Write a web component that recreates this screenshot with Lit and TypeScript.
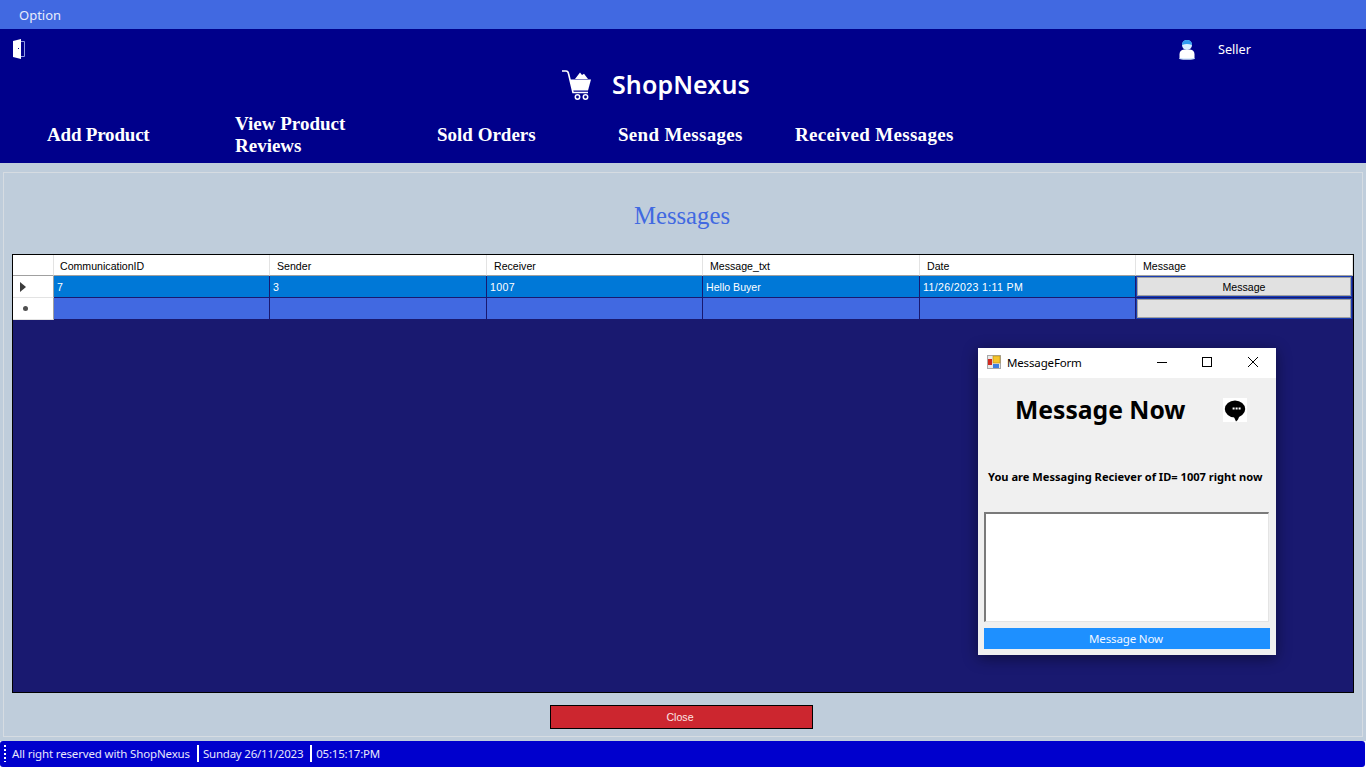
import { LitElement, html, css, svg } from 'lit';
import { customElement } from 'lit/decorators.js';

const SEGOE = css`"Noto Sans", "Open Sans", sans-serif`;

const doorIcon = svg`
  <svg width="14" height="22" viewBox="0 0 14 22" aria-hidden="true">
    <path d="M9 3.5 H12.5 V18.5 H9" fill="none" stroke="#8f9be0" stroke-width="1"/>
    <path d="M1 3 L9 1 V21 L1 19 Z" fill="#fff"/>
    <rect x="6" y="10" width="1" height="1" fill="#00008b"/>
  </svg>`;

const cartIcon = svg`
  <svg width="32" height="32" viewBox="0 0 32 32" aria-hidden="true">
    <path d="M1 2 H5 Q7 2 7.5 4.5 L12 23.5 H27" fill="none" stroke="#fff" stroke-width="1.6"/>
    <path d="M9 10.5 H30 L27 21.5 H11.5 Z" fill="#fff"/>
    <path d="M14 10 L19 3.5 L21 6 L23 4.8 L27 10 Z" fill="#fff"/>
    <circle cx="16.5" cy="28" r="2.2" fill="none" stroke="#fff" stroke-width="1.5"/>
    <circle cx="24.5" cy="28" r="2.2" fill="none" stroke="#fff" stroke-width="1.5"/>
  </svg>`;

const userIcon = svg`
  <svg width="18" height="21" viewBox="0 0 18 21" aria-hidden="true">
    <path d="M1.5 20 V15.5 Q1.5 11 6 10.5 H12 Q16.5 11 16.5 15.5 V20 Q9 21 1.5 20 Z" fill="#fff"/>
    <path d="M1.5 19 Q9 20 16.5 19 V20 Q9 21 1.5 20 Z" fill="#bcd8f8"/>
    <circle cx="9" cy="6" r="5" fill="#d8eeff"/>
    <path d="M4 6 Q4 1 9 1 Q14 1 14 6 Q9 4 4 6 Z" fill="#2f9bf0"/>
  </svg>`;

const formIcon = svg`
  <svg width="14" height="14" viewBox="0 0 14 14" aria-hidden="true">
    <rect x="0.5" y="0.5" width="13" height="13" fill="#e8e8e8" stroke="#a8a8a8"/>
    <rect x="6" y="1" width="7" height="7" fill="#f5c52c" stroke="#b98a10" stroke-width="0.6"/>
    <rect x="1" y="4" width="4" height="6" fill="#d02a20"/>
    <rect x="6" y="9" width="6" height="4" fill="#3d7fe0"/>
  </svg>`;

const chatIcon = svg`
  <svg width="24" height="24" viewBox="0 0 24 24" aria-hidden="true">
    <rect width="24" height="24" fill="#fff"/>
    <ellipse cx="12" cy="11" rx="10.2" ry="8.6" fill="#000"/>
    <path d="M10.5 18 L13 23.5 Q15.5 22 16.5 17 Z" fill="#000"/>
    <rect x="9.6" y="9.5" width="2" height="2" fill="#fff"/>
    <rect x="12.6" y="9.5" width="2" height="2" fill="#fff"/>
    <rect x="15.6" y="9.5" width="2" height="2" fill="#fff"/>
  </svg>`;

@customElement('app-root')
export class AppRoot extends LitElement {
  static styles = css`
    :host {
      display: block;
      width: 1366px;
      height: 768px;
      overflow: hidden;
      background: #fff;
      font-family: "Liberation Sans", Arial, sans-serif;
    }

    .page {
      position: relative;
      display: flex;
      flex-direction: column;
      height: 768px;
    }

    .menu {
      height: 29px;
      flex: none;
      display: flex;
      align-items: center;
      padding-left: 19px;
      box-sizing: border-box;
      background: #4169e1;
      color: #e8ecfb;
      font: 13px ${SEGOE};
    }

    .header {
      height: 134px;
      flex: none;
      background: #00008b;
      color: #fff;
    }

    .top {
      height: 40px;
      display: flex;
      align-items: center;
      padding-left: 12px;
    }

    .user {
      margin-left: auto;
      margin-right: 115px;
      display: flex;
      align-items: center;
      gap: 22px;
      font: 12.7px ${SEGOE};
    }

    .brand {
      height: 32px;
      display: flex;
      align-items: center;
      padding-left: 561px;
      gap: 19px;
      font: 600 25px ${SEGOE};
      letter-spacing: 0.1px;
    }

    .brand span {
      margin-bottom: 2px;
    }

    .nav {
      margin-top: 11px;
      height: 46px;
      display: flex;
      align-items: center;
      padding-left: 47px;
      font: bold 19px/22px "Liberation Serif", "Times New Roman", serif;
    }

    .nav span {
      flex: none;
    }

    .content {
      flex: none;
      height: 578px;
      box-sizing: border-box;
      padding: 9px 3px 4px;
      background: #bfcddb;
    }

    .panel {
      height: 100%;
      box-sizing: border-box;
      border: 1px solid #d6dce2;
      padding: 0 8px;
      display: flex;
      flex-direction: column;
      align-items: center;
    }

    .title {
      margin: 28px 2px 0 0;
      height: 30px;
      line-height: 30px;
      font-family: "Liberation Serif", "Times New Roman", serif;
      font-size: 24.7px;
      color: #4169e1;
    }

    .grid {
      margin-top: 23px;
      align-self: stretch;
      height: 439px;
      box-sizing: border-box;
      border: 1px solid #000;
      background: #191970;
    }

    .table {
      display: grid;
      grid-template-columns: 41px 216px 217px 216px 217px 216px 217px;
      grid-template-rows: 21px 22px 22px;
      font-size: 10.6px;
    }

    .table > div {
      box-sizing: border-box;
      display: flex;
      align-items: center;
      white-space: nowrap;
    }

    .table > .head {
      padding: 2px 0 0 7px;
      background: #fff;
      color: #000;
      border-right: 1px solid #e3e3e3;
      border-bottom: 1px solid #a0a0a0;
    }

    .table > .head:nth-child(2) {
      padding-left: 6px;
    }

    .table > .rowhead {
      background: #fff;
      border-right: 1px solid #a0a0a0;
      border-bottom: 1px solid #e3e3e3;
      padding-left: 7px;
    }

    .sel,
    .new {
      padding-left: 3px;
      color: #fff;
      border-right: 1px solid #191970;
      border-bottom: 1px solid #191970;
    }

    .sel {
      background: #0078d7;
    }

    .new {
      background: #4169e1;
    }

    .num {
      letter-spacing: 0.35px;
    }

    .table > .cell-btn {
      padding: 1px;
      border-right: 1px solid #191970;
      border-bottom: 1px solid #191970;
      background: #1a3fb4;
    }

    .cell-btn span {
      flex: 1;
      height: 100%;
      box-sizing: border-box;
      border: 1px solid #a0a0a0;
      background: #e1e1e1;
      color: #000;
      display: flex;
      align-items: center;
      justify-content: center;
    }

    .arrow {
      width: 0;
      height: 0;
      border-left: 6px solid #3c3c3c;
      border-top: 5px solid transparent;
      border-bottom: 5px solid transparent;
    }

    .star {
      width: 5px;
      height: 5px;
      margin-left: 3px;
      border-radius: 50%;
      background: #505050;
    }

    .close {
      margin: 12px 4px 0 0;
      width: 263px;
      height: 24px;
      box-sizing: border-box;
      padding-right: 2px;
      border: 1px solid #000;
      background: #cc262f;
      color: #fbe6e6;
      font-size: 10.6px;
      display: flex;
      align-items: center;
      justify-content: center;
    }

    .status {
      flex: none;
      height: 26px;
      width: 1365px;
      box-sizing: border-box;
      padding-bottom: 1px;
      display: flex;
      align-items: center;
      border-radius: 3px;
      background: #0000cd;
      color: #e6e6fb;
      font: 11.5px ${SEGOE};
      letter-spacing: -0.15px;
      white-space: nowrap;
    }

    .tight {
      letter-spacing: -0.22px;
    }

    .grip {
      width: 2px;
      height: 17px;
      margin: 0 6px 0 4px;
      background: repeating-linear-gradient(#fff 0 2px, transparent 2px 4px);
    }

    .sep {
      width: 2px;
      height: 17px;
      background: #fff;
      margin: 0 4px 0 7px;
    }

    .window {
      position: absolute;
      left: 978px;
      top: 348px;
      width: 298px;
      height: 307px;
      background: #f0f0f0;
      color: #000;
      box-shadow: 0 3px 14px rgba(0, 0, 0, 0.45);
      display: flex;
      flex-direction: column;
    }

    .titlebar {
      height: 30px;
      flex: none;
      box-sizing: border-box;
      padding: 0 0 2px 9px;
      background: #fff;
      display: flex;
      align-items: center;
      gap: 6px;
      font: 11.5px ${SEGOE};
      letter-spacing: -0.15px;
    }

    .controls {
      margin-left: auto;
      margin-right: 17px;
      display: flex;
      align-items: center;
      gap: 34px;
    }

    .head-line {
      margin-top: 14px;
      height: 36px;
      display: flex;
      align-items: center;
      padding-left: 37px;
      gap: 37px;
      font: bold 24.7px ${SEGOE};
    }

    .head-line span {
      margin-bottom: 1px;
    }

    .notice {
      margin-top: 41px;
      padding-left: 10px;
      font: bold 11.1px ${SEGOE};
      white-space: nowrap;
    }

    .box {
      margin: 28px 0 0 6px;
      width: 285px;
      height: 110px;
      box-sizing: border-box;
      background: #fff;
      border-style: solid;
      border-width: 2px 1px 1px 2px;
      border-color: #7a7a7a #e4e4e4 #e4e4e4 #7a7a7a;
    }

    .send {
      margin: 6px 0 0 6px;
      width: 286px;
      height: 21px;
      box-sizing: border-box;
      padding-right: 2px;
      background: #1e90ff;
      color: #f0f7ff;
      font: 11.5px ${SEGOE};
      letter-spacing: -0.15px;
      display: flex;
      align-items: center;
      justify-content: center;
    }
  `;

  private columns = ['CommunicationID', 'Sender', 'Receiver', 'Message_txt', 'Date', 'Message'];
  private row = ['7', '3', '1007', 'Hello Buyer', '11/26/2023 1:11 PM'];
  private navItems: { label: unknown; width: number; spacing: number }[] = [
    { label: 'Add Product', width: 188, spacing: -0.2 },
    { label: html`View Product<br />Reviews`, width: 202, spacing: 0 },
    { label: 'Sold Orders', width: 181, spacing: 0 },
    { label: 'Send Messages', width: 177, spacing: 0.3 },
    { label: 'Received Messages', width: 200, spacing: 0.3 },
  ];

  render(): unknown {
    return html`
      <div class="page">
        <div class="menu">Option</div>
        <div class="header">
          <div class="top">
            ${doorIcon}
            <div class="user">${userIcon}<span>Seller</span></div>
          </div>
          <div class="brand">${cartIcon}<span>ShopNexus</span></div>
          <div class="nav">
            ${this.navItems.map(
              (item) => html`<span style="width:${item.width}px;letter-spacing:${item.spacing}px">${item.label}</span>`
            )}
          </div>
        </div>
        <div class="content">
          <div class="panel">
            <div class="title">Messages</div>
            <div class="grid">
              <div class="table">
                <div class="head"></div>
                ${this.columns.map((c) => html`<div class="head">${c}</div>`)}
                <div class="rowhead"><i class="arrow"></i></div>
                ${this.row.map((c) => html`<div class="sel ${c.length > 1 && /\d/.test(c) ? 'num' : ''}">${c}</div>`)}
                <div class="cell-btn"><span>Message</span></div>
                <div class="rowhead"><i class="star"></i></div>
                ${this.row.map(() => html`<div class="new"></div>`)}
                <div class="cell-btn"><span></span></div>
              </div>
            </div>
            <div class="close">Close</div>
          </div>
        </div>
        <div class="status">
          <i class="grip"></i>
          <span>All right reserved with ShopNexus</span>
          <i class="sep"></i>
          <span class="tight">Sunday 26/11/2023</span>
          <i class="sep"></i>
          <span class="tight">05:15:17:PM</span>
        </div>

        <div class="window">
          <div class="titlebar">
            ${formIcon}
            <span>MessageForm</span>
            <div class="controls">
              <svg width="12" height="12" viewBox="0 0 12 12" aria-hidden="true"><path d="M2 6.5 H12" stroke="#000"/></svg>
              <svg width="12" height="12" viewBox="0 0 12 12" aria-hidden="true"><rect x="1.5" y="1.5" width="9" height="9" fill="none" stroke="#000"/></svg>
              <svg width="12" height="12" viewBox="0 0 12 12" aria-hidden="true"><path d="M1 1 L11 11 M11 1 L1 11" stroke="#000" fill="none"/></svg>
            </div>
          </div>
          <div class="head-line"><span>Message Now</span>${chatIcon}</div>
          <div class="notice">You are Messaging Reciever of ID= 1007 right now</div>
          <div class="box"></div>
          <div class="send">Message Now</div>
        </div>
      </div>
    `;
  }
}

declare global {
  interface HTMLElementTagNameMap {
    'app-root': AppRoot;
  }
}
